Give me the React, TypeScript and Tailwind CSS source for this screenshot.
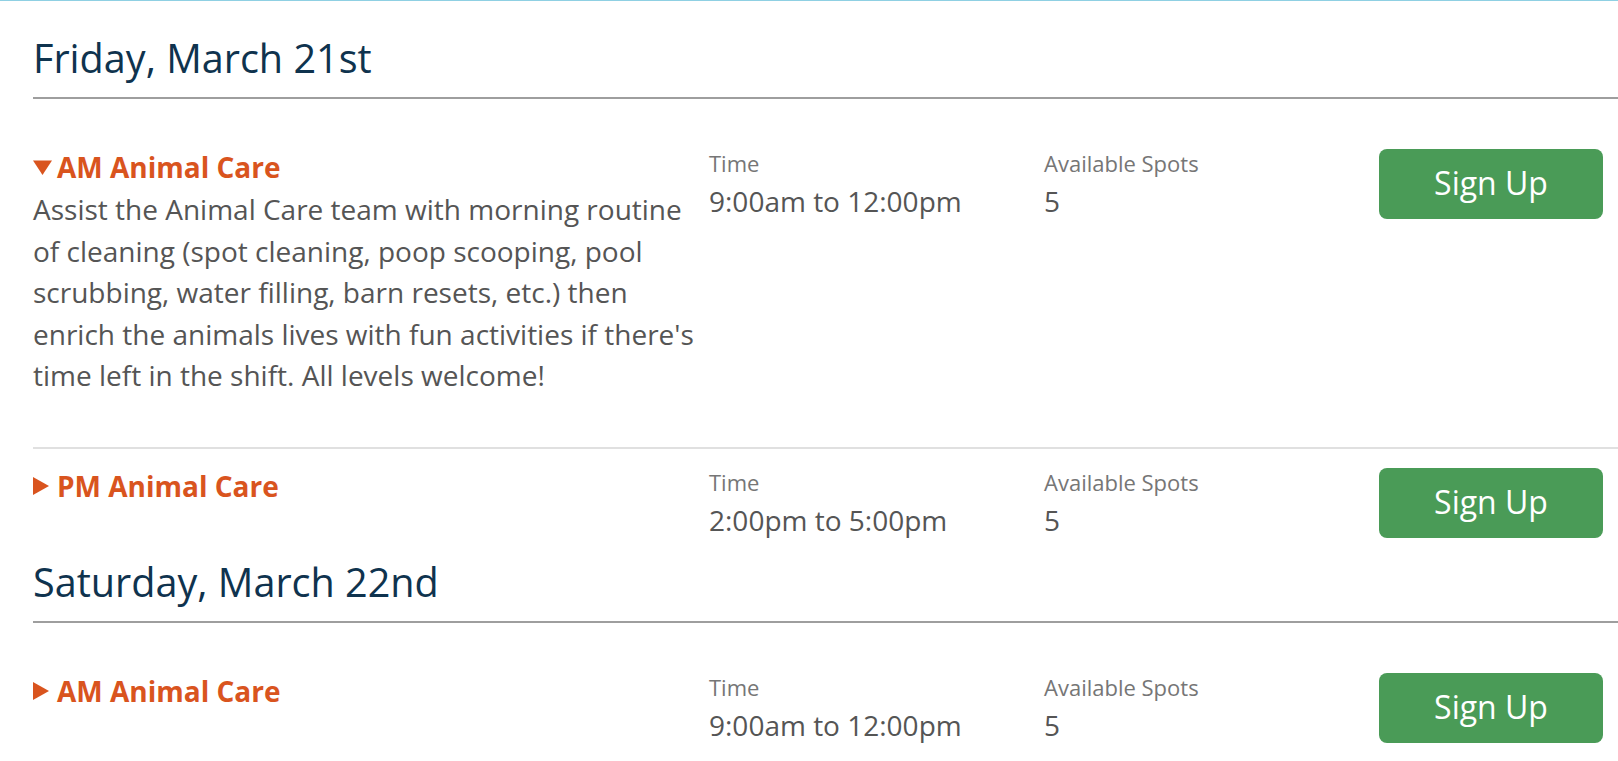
import React from "react";

type Shift = {
  title: string;
  time: string;
  spots: string;
  open?: boolean;
  desc?: string;
};

type Day = { date: string; shifts: Shift[] };

const days: Day[] = [
  {
    date: "Friday, March 21st",
    shifts: [
      {
        title: "AM Animal Care",
        time: "9:00am to 12:00pm",
        spots: "5",
        open: true,
        desc: "Assist the Animal Care team with morning routine of cleaning (spot cleaning, poop scooping, pool scrubbing, water filling, barn resets, etc.) then enrich the animals lives with fun activities if there's time left in the shift. All levels welcome!",
      },
      { title: "PM Animal Care", time: "2:00pm to 5:00pm", spots: "5" },
    ],
  },
  {
    date: "Saturday, March 22nd",
    shifts: [{ title: "AM Animal Care", time: "9:00am to 12:00pm", spots: "5" }],
  },
];

function Caret({ open }: { open?: boolean }) {
  return open ? (
    <svg width="19" height="15" viewBox="0 0 19 15" className="shrink-0 mr-[5px]">
      <polygon points="0,0.5 19,0.5 9.5,15" fill="#d9541e" />
    </svg>
  ) : (
    <svg width="16" height="18" viewBox="0 0 16 18" className="shrink-0 mr-[8px]">
      <polygon points="0,0 16,9 0,18" fill="#d9541e" />
    </svg>
  );
}

function Row({ s, last }: { s: Shift; last: boolean }) {
  return (
    <div
      className={`grid grid-cols-[676px_335px_335px_224px] pt-[19px] pb-[19px] ${
        last ? "" : "border-b-2 border-[#e0e0e0]"
      }`}
    >
      <div className={s.open ? "pr-[12px] mb-[31px]" : "pr-[12px]"}>
        <div className="flex items-center h-[37px]">
          <Caret open={s.open} />
          <span className="text-[28px] font-bold text-[#d9541e] leading-[37px]">{s.title}</span>
        </div>
        {s.desc && (
          <p className="mt-[3px] text-[28px] leading-[41.5px] text-[#555555]">{s.desc}</p>
        )}
      </div>
      <div>
        <div className="text-[22px] leading-[29px] text-[#767676]">Time</div>
        <div className="mt-[6px] text-[28px] leading-[35px] text-[#555555]">{s.time}</div>
      </div>
      <div>
        <div className="text-[22px] leading-[29px] text-[#767676]">Available Spots</div>
        <div className="mt-[6px] text-[28px] leading-[35px] text-[#555555]">{s.spots}</div>
      </div>
      <div>
        <button className="w-[224px] h-[70px] rounded-[8px] bg-[#4a9b57] text-white text-[32px] leading-none pb-[2px]">
          Sign Up
        </button>
      </div>
    </div>
  );
}

export default function App() {
  return (
    <div
      className="min-h-screen bg-white border-t border-[#8fd0e3] overflow-hidden"
      style={{ fontFamily: '"Open Sans", "Noto Sans", sans-serif' }}
    >
      <div className="pl-[33px] pt-[32px]">
        {days.map((d) => (
          <div key={d.date}>
            <div className="border-b-2 border-[#9e9e9e] pb-[14px] mb-[31px]">
              <h2 className="text-[39.6px] leading-[50px] text-[#0f334e]">{d.date}</h2>
            </div>
            {d.shifts.map((s, i) => (
              <Row key={i} s={s} last={i === d.shifts.length - 1} />
            ))}
          </div>
        ))}
      </div>
    </div>
  );
}
